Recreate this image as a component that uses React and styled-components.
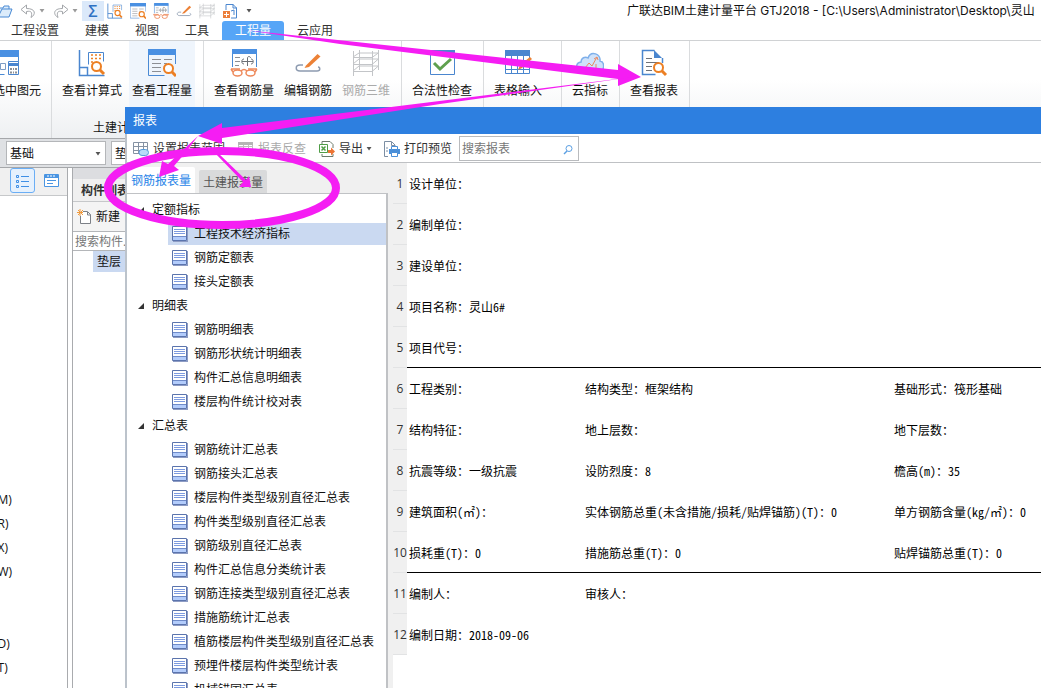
import React from "react";
import styled, { createGlobalStyle } from "styled-components";

const treeData = [
  {
    title: "定额指标",
    items: ["工程技术经济指标", "钢筋定额表", "接头定额表"],
  },
  {
    title: "明细表",
    items: [
      "钢筋明细表",
      "钢筋形状统计明细表",
      "构件汇总信息明细表",
      "楼层构件统计校对表",
    ],
  },
  {
    title: "汇总表",
    items: [
      "钢筋统计汇总表",
      "钢筋接头汇总表",
      "楼层构件类型级别直径汇总表",
      "构件类型级别直径汇总表",
      "钢筋级别直径汇总表",
      "构件汇总信息分类统计表",
      "钢筋连接类型级别直径汇总表",
      "措施筋统计汇总表",
      "植筋楼层构件类型级别直径汇总表",
      "预埋件楼层构件类型统计表",
      "机械锚固汇总表",
    ],
  },
];

const reportRows = [
  ["设计单位："],
  ["编制单位："],
  ["建设单位："],
  ["项目名称：灵山6#"],
  ["项目代号："],
  ["工程类别：", "结构类型：框架结构", "基础形式：筏形基础"],
  ["结构特征：", "地上层数：", "地下层数："],
  ["抗震等级：一级抗震", "设防烈度：8", "檐高(m)：35"],
  [
    "建筑面积(㎡)：",
    "实体钢筋总重(未含措施/损耗/贴焊锚筋)(T)：0",
    "单方钢筋含量(kg/㎡)：0",
  ],
  ["损耗重(T)：0", "措施筋总重(T)：0", "贴焊锚筋总重(T)：0"],
  ["编制人：", "审核人："],
  ["编制日期：2018-09-06"],
];

// rows with a rule under them
const ruledRows = [4, 9];

const componentTypes = [
  "筏板基础(M)",
  "筏板主筋(R)",
  "筏板负筋(X)",
  "基础板带(W)",
  "集水坑(K)",
  "柱墩(Y)",
  "独立基础(D)",
  "条形基础(T)",
];

const Svg = ({ size = 28, box = 28, children }) => (
  <svg
    width={size}
    height={size}
    viewBox={`0 0 ${box} ${box}`}
    fill="none"
    aria-hidden="true"
  >
    {children}
  </svg>
);

// Icons
const Magnifier = ({ x = 0, y = 0 }) => (
  <g transform={`translate(${x} ${y})`} stroke="#ec7f23">
    <circle cx="5.5" cy="5.5" r="4.5" strokeWidth="2" fill="#fff" />
    <path d="M9 9l4 4" strokeWidth="3" />
  </g>
);

const FormulaIcon = ({ size }) => (
  <Svg size={size}>
    <path d="M1.5 1v25.500h25M1.500 18.500h8v8" stroke="#4a86cf" strokeWidth="1.500" />
    <path d="M10.500 15.500v-12h15v9" stroke="#4a86cf" />
    <path
      d="M13 6h2m2 0h2m2 0h2M13 9.500h2m2 0h2m2 0h2M13 13h2"
      stroke="#ec7f23"
      strokeWidth="1.500"
    />
    <Magnifier x={13} y={12} />
  </Svg>
);

const QuantityIcon = ({ size }) => (
  <Svg size={size}>
    <path d="M.5 1v25.500h16M27.500 1v14" stroke="#4a8ad4" />
    <path d="M0 0h28v6H0z" fill="#4a90e2" />
    <path
      d="M4 10.500h9M4 14.500h9M4 18.500h9M4 22.500h9M16 10.500h8M16 14.500h3"
      stroke="#8c8f94"
    />
    <Magnifier x={15} y={14} />
  </Svg>
);

const RebarIcon = ({ size }) => (
  <Svg size={size}>
    <path d="M2.500 1v17M26.500 1v17" stroke="#4a8ad4" />
    <path d="M2 0h25v5H2z" fill="#4a90e2" />
    <path d="M5 8.500h5M5 12.500h5M5 16.500h4" stroke="#8c8f94" />
    <path
      d="M12 12.500h11M17.500 17V9c0-2 3-2 3 0M14 15c-3 0-3-5 0-5M21 15c3 0 3-5 0-5"
      stroke="#6c7076"
    />
    <path
      d="M1 20h9M18 20h9M11 22c2-2 4-2 6 0M1 20l2 3M27 20l-2 3"
      stroke="#ee8a5c"
      strokeWidth="1.500"
    />
    <ellipse cx="7.500" cy="24" rx="4.500" ry="3" stroke="#ee8a5c" strokeWidth="1.500" />
    <ellipse cx="20.500" cy="24" rx="4.500" ry="3" stroke="#ee8a5c" strokeWidth="1.500" />
  </Svg>
);

const EditIcon = ({ size }) => (
  <Svg size={size}>
    <path
      d="M9 16H6c-5 0-5 6 0 6h17c4 0 3-4 1-4"
      stroke="#8d9bb0"
      strokeWidth="1.500"
    />
    <path d="M12 16.500L23.500 5l3 2.500L15 18l-4.500 1z" fill="#ec8136" />
  </Svg>
);

const GridIcon = ({ size }) => (
  <Svg size={size}>
    <path
      d="M1.500 2v25M7.500 1v20M20.500 2v25M26.500 1v20M1 8.500h19l7-5M1 15.500h19l7-6M1 22.500h19l7-6M1 8l6-4h20M1 15l6-5h20M1 22l6-5h20"
      stroke="#c3c5c8"
    />
  </Svg>
);

const CheckIcon = () => (
  <Svg>
    <path d="M2.500 2.500h24v23h-24z" stroke="#4a86cf" />
    <path d="M2 1h25v5H2z" fill="#4a86cf" />
    <path d="M6 14l6 6 11-10" stroke="#5fa04e" strokeWidth="3" />
  </Svg>
);

const TableIcon = () => (
  <Svg>
    <path
      d="M1.500 3v21.500h24V3M1 11.500h24M1 15.500h24M1 20.500h24M7.500 7v17M13.500 7v17M19.500 7v17"
      stroke="#4a86cf"
    />
    <path d="M1 1h25v6H1z" fill="#4a86cf" />
    <path d="M14 21l2-5 10-8 2 2-10 9z" fill="#ec8136" />
  </Svg>
);

const CloudIcon = () => (
  <Svg>
    <path
      d="M6 23c-7-1-7-9-1-10 0-4 4-6 7-4 3-8 13-4 12 3 5 1 5 10-1 11z"
      fill="#cfe2fa"
      stroke="#7fb0ea"
      strokeWidth="1.500"
    />
    <path d="M9 19l4-5 3 3 5-9M18 10l3-2 1 3M10 23v-2M15 23v-3M20 23v-8" stroke="#e98a62" />
  </Svg>
);

const ReportIcon = () => (
  <Svg>
    <path d="M14.500 1.500H2.500v24h13M22.500 9v5" stroke="#4a86cf" strokeWidth="1.500" />
    <path d="M14 1l8 8h-8z" fill="#4a86cf" />
    <path d="M6 9.500h6M6 13.500h13M6 17.500h6M6 21.500h6" stroke="#6e7278" />
    <Magnifier x={13} y={13} />
  </Svg>
);

const PickIcon = () => (
  <Svg>
    <path d="M.5 1v24.500h13M27.500 1v12" stroke="#4a8ad4" />
    <path d="M0 1h28v7H0z" fill="#4a90e2" />
    <path d="M9.500 14.500h5v6h-5z" stroke="#7d9cc4" />
    <path d="M17.500 12.500h10v13h-10z" fill="#fff" stroke="#4a86cf" />
    <path d="M18 14h9v3h-9z" fill="#4a86cf" />
    <path d="M19 20h2m1 0h1m1 0h2M19 23.500h2m1 0h1m1 0h2" stroke="#8c8f94" strokeWidth="2" />
  </Svg>
);

const FolderIcon = () => (
  <Svg size={16} box={16}>
    <path d="M1 14V5h5l1-2h5v3M1 14l4-8h10l-3 8z" fill="#dcecfb" stroke="#4a8ad4" />
  </Svg>
);

const UndoIcon = ({ flip }) => (
  <Svg size={16} box={16}>
    <path
      transform={flip ? "matrix(-1 0 0 1 16 0)" : undefined}
      d="M6.500 2L1 6.500 6.500 11V8.500c5-1 6 1 4.500 6 5-3 5-9-4.500-9z"
      stroke="#a3a6aa"
    />
  </Svg>
);

const NewFileIcon = () => (
  <Svg size={16} box={16}>
    <path d="M4 7V1.500h7L14.500 5v10H9" stroke="#4a86cf" />
    <path d="M11 1v4h4" stroke="#4a86cf" />
    <path d="M1 8h7v7H1z" fill="#ec7f3b" />
    <path d="M2 11.500h5M4.500 9v5" stroke="#fff" />
    <path d="M9 8l3-1v5" stroke="#4a86cf" />
  </Svg>
);

const RangeIcon = ({ muted }) => (
  <Svg size={16} box={16}>
    <path
      d="M.5 1.500h14v11H.500zM0 5.500h15M0 9.500h15M5.500 1v12M10.500 1v8"
      stroke={muted ? "#c0c0c0" : "#8592a3"}
    />
    {muted ? (
      <path d="M0 1h15v3H0z" fill="#b5b5b5" />
    ) : (
      <rect x="6" y="8.500" width="9.500" height="6" rx="3" fill="#b8dbf8" stroke="#5a9bd8" />
    )}
  </Svg>
);

const ExportIcon = () => (
  <Svg size={16} box={16}>
    <path d="M3 3V.500h8l3 3V7M3 13v2.500h11V13" stroke="#6b7a6b" />
    <path d="M.5 3.500h8v8h-8z" fill="#fff" stroke="#4f9d46" />
    <path d="M2.500 5.500l4 4M6.500 5.500l-4 4" stroke="#4f9d46" strokeWidth="1.500" />
    <path d="M9 9h3V6.500l4 4-4 4V12H9z" fill="#ec7433" />
  </Svg>
);

const PrintIcon = () => (
  <Svg size={16} box={16}>
    <path d="M4 15.500H.500V.500h7L11 4v2M7.500 1v3.500H11" stroke="#7c8ea3" />
    <path d="M2 7h2M2 10h2" stroke="#7c8ea3" />
    <path d="M5 8h11v5H5z" fill="#4a8fd8" />
    <path d="M7.500 5.500h6v3h-6zM7.500 11.500h6v4h-6z" fill="#fff" stroke="#4a8fd8" />
  </Svg>
);

const SheetIcon = () => (
  <Svg size={16} box={16}>
    <path d="M.5 .5h14v14H.500z" fill="#fff" stroke="#5b74ad" />
    <path d="M1 11h13v3H1z" fill="#b3ccfb" />
    <path d="M2 3.500h11M2 5.500h11M2 7.500h11" stroke="#7d9be0" />
    <path d="M1 10.500h13" stroke="#6f8bc9" />
    <path d="M1 15.500h15M15.500 1v15" stroke="#8e9cc4" />
  </Svg>
);

const NewIcon = () => (
  <Svg size={16} box={16}>
    <path d="M6 2.500h4.500l3 3v9h-10V7M10.500 3v3h3" fill="#fff" stroke="#7c8087" />
    <path d="M3 0v7M0 3.500h6M1 1l5 5M6 1L1 6" stroke="#f09a3c" />
  </Svg>
);

const ListViewIcon = () => (
  <Svg size={16} box={16}>
    <path d="M1.500 2.500h2v2h-2zM1.500 7.500h2v2h-2zM1.500 12.500h2v2h-2z" stroke="#3e8fe6" />
    <path d="M6 3.500h8M6 8.500h8M6 13.500h8" stroke="#3e8fe6" />
  </Svg>
);

const CardViewIcon = () => (
  <Svg size={16} box={16}>
    <path d="M.5 1.500h14v12H.500z" fill="#fff" stroke="#4a95e2" />
    <path d="M1 1h13v4H1z" fill="#4a95e2" />
    <path d="M3 3h2m1 0h2m1 0h2" stroke="#fff" />
    <path d="M3 7.500h9M3 10.500h6" stroke="#4a95e2" />
  </Svg>
);

const SearchIcon = () => (
  <Svg size={12} box={12}>
    <circle cx="7" cy="5.500" r="3" stroke="#5b9fe3" />
    <path d="M5 8l-3 3" stroke="#5b9fe3" strokeWidth="1.500" />
  </Svg>
);

const Expander = () => (
  <Svg size={8} box={8}>
    <path d="M7 1v6H1z" fill="#333" />
  </Svg>
);

const Annotations = () => (
  <AnnotationLayer aria-hidden="true">
    <g fill="#f51df3">
      <path d="M245 30L618 70V64L641 77 618 86V79L340 44z" />
      <path d="M633 77L222 128V123L198 136 222 144V138L440 104z" />
      <path d="M198 136L168 164 162 161 159 177 179 170 174 166 186 152z" />
      <path d="M214 152L243 182 239 187 251 187 249 176 246 180 217 152z" />
    </g>
    <ellipse
      cx="222"
      cy="188"
      rx="114"
      ry="37"
      fill="none"
      stroke="#f51df3"
      strokeWidth="8"
    />
  </AnnotationLayer>
);

const App = () => {
  return (
    <Page>
      <GlobalStyle />
      <TitleBar>
        <QuickAccess>
          <QuickButton aria-label="打开"><FolderIcon /></QuickButton>
          <QuickButton aria-label="撤销">
            <UndoIcon />
            <Caret $color="#9a9a9a" />
          </QuickButton>
          <QuickButton aria-label="恢复">
            <UndoIcon flip />
            <Caret $color="#9a9a9a" />
          </QuickButton>
          <SumButton aria-label="汇总计算">Σ</SumButton>
          <QuickButton aria-label="查看计算式"><FormulaIcon size={16} /></QuickButton>
          <QuickButton aria-label="查看工程量"><QuantityIcon size={16} /></QuickButton>
          <QuickButton aria-label="查看钢筋量"><RebarIcon size={16} /></QuickButton>
          <QuickButton aria-label="编辑钢筋"><EditIcon size={16} /></QuickButton>
          <QuickButton aria-label="钢筋三维"><GridIcon size={16} /></QuickButton>
          <QuickButton aria-label="新建"><NewFileIcon /></QuickButton>
          <QuickButton aria-label="更多"><Caret /></QuickButton>
        </QuickAccess>
        <WindowTitle>
          广联达BIM土建计量平台 GTJ2018 - [C:\Users\Administrator\Desktop\灵山
        </WindowTitle>
      </TitleBar>

      <MenuBar>
        {["工程设置", "建模", "视图", "工具", "工程量", "云应用"].map((name) => (
          <MenuTab key={name} $active={name === "工程量"}>
            {name}
          </MenuTab>
        ))}
      </MenuBar>

      <Ribbon>
        <RibbonGroup $width={52} $end>
          <RibbonRow>
            <RibbonButton><PickIcon />查看选中图元</RibbonButton>
          </RibbonRow>
        </RibbonGroup>
        <RibbonGroup $width={152}>
          <RibbonRow>
            <RibbonButton><FormulaIcon />查看计算式</RibbonButton>
            <RibbonButton $active><QuantityIcon />查看工程量</RibbonButton>
          </RibbonRow>
          <GroupLabel>土建计</GroupLabel>
        </RibbonGroup>
        <RibbonGroup $width={198}>
          <RibbonRow>
            <RibbonButton><RebarIcon />查看钢筋量</RibbonButton>
            <RibbonButton><EditIcon />编辑钢筋</RibbonButton>
            <RibbonButton disabled><GridIcon />钢筋三维</RibbonButton>
          </RibbonRow>
        </RibbonGroup>
        <RibbonGroup $width={82}>
          <RibbonRow>
            <RibbonButton><CheckIcon />合法性检查</RibbonButton>
          </RibbonRow>
        </RibbonGroup>
        <RibbonGroup $width={78}>
          <RibbonRow>
            <RibbonButton><TableIcon />表格输入</RibbonButton>
          </RibbonRow>
        </RibbonGroup>
        <RibbonGroup $width={58}>
          <RibbonRow>
            <RibbonButton><CloudIcon />云指标</RibbonButton>
          </RibbonRow>
        </RibbonGroup>
        <RibbonGroup $width={70}>
          <RibbonRow>
            <RibbonButton><ReportIcon />查看报表</RibbonButton>
          </RibbonRow>
        </RibbonGroup>
      </Ribbon>

      <FilterBar>
        <SelectBox>
          <select aria-label="楼层" defaultValue="基础">
            <option>基础</option>
          </select>
          <Caret />
        </SelectBox>
        <SelectBox>
          <select aria-label="构件类型" defaultValue="垫层">
            <option>垫层</option>
          </select>
          <Caret />
        </SelectBox>
      </FilterBar>

      <Workspace>
        <Palette>
          <PaletteHeader>
            <ViewButton $active aria-label="列表视图"><ListViewIcon /></ViewButton>
            <ViewButton aria-label="卡片视图"><CardViewIcon /></ViewButton>
          </PaletteHeader>
          <TypeList>
            {componentTypes.map((type) => (
              <li key={type}>{type}</li>
            ))}
          </TypeList>
        </Palette>
        <ComponentPanel>
          <PanelGrip />
          <PanelTitle>构件列表</PanelTitle>
          <NewButton><NewIcon />新建</NewButton>
          <PanelSearch aria-label="搜索构件" placeholder="搜索构件..." />
          <PanelItem>垫层</PanelItem>
        </ComponentPanel>
      </Workspace>

      <Dialog role="dialog" aria-label="报表">
        <DialogTitle>报表</DialogTitle>
        <DialogToolbar>
          <ToolButton><RangeIcon />设置报表范围</ToolButton>
          <ToolButton disabled><RangeIcon muted />报表反查</ToolButton>
          <ToolButton><ExportIcon />导出<Caret /></ToolButton>
          <ToolButton><PrintIcon />打印预览</ToolButton>
          <SearchBox>
            <input aria-label="搜索报表" placeholder="搜索报表" />
            <SearchIcon />
          </SearchBox>
        </DialogToolbar>
        <DialogBody>
          <Sidebar>
            <ReportTabs>
              <ReportTab $active>钢筋报表量</ReportTab>
              <ReportTab>土建报表量</ReportTab>
            </ReportTabs>
            <Tree>
              {treeData.map((group, g) => (
                <React.Fragment key={group.title}>
                  <TreeGroup><Expander />{group.title}</TreeGroup>
                  {group.items.map((item, i) => (
                    <TreeItem key={item} $selected={g === 0 && i === 0}>
                      <SheetIcon />
                      {item}
                    </TreeItem>
                  ))}
                </React.Fragment>
              ))}
            </Tree>
          </Sidebar>
          <ReportPane>
            <ReportTable>
              <colgroup>
                <col width="14" />
                <col width="176" />
                <col width="309" />
                <col />
              </colgroup>
              <tbody>
                {reportRows.map((row, i) => (
                  <ReportRow key={i} $ruled={ruledRows.includes(i)}>
                    <th scope="row">{i + 1}</th>
                    {[0, 1, 2].map((c) => (
                      <td key={c}>{row[c]}</td>
                    ))}
                  </ReportRow>
                ))}
              </tbody>
            </ReportTable>
          </ReportPane>
        </DialogBody>
      </Dialog>

      <Annotations />
    </Page>
  );
};

const GlobalStyle = createGlobalStyle`
  * {
    box-sizing: border-box;
    margin: 0;
    padding: 0;
  }
  body {
    font-family: "Open Sans", "Noto Sans CJK SC", sans-serif;
    font-size: 12px;
    line-height: 18px;
    color: #111;
    overflow: hidden;
  }
  button, input, select {
    font: inherit;
    color: inherit;
    border: none;
    background: none;
    outline: none;
  }
  svg {
    flex-shrink: 0;
  }
`;

const Page = styled.div`
  position: relative;
  display: flex;
  flex-direction: column;
  height: 100vh;
  overflow: hidden;
  background: #fff;
  white-space: nowrap;
`;

const Caret = styled.span`
  flex-shrink: 0;
  width: 8px;
  height: 4px;
  background: ${(props) => props.$color || "#555"};
  clip-path: polygon(15% 0, 85% 0, 50% 100%);
`;

const TitleBar = styled.header`
  display: flex;
  flex-shrink: 0;
  height: 21px;
`;

const QuickAccess = styled.div`
  display: flex;
  align-items: center;
  gap: 7px;
  width: 630px;
  margin-left: -3px;
  flex-shrink: 0;
`;

const QuickButton = styled.button`
  display: flex;
  align-items: center;
  gap: 2px;
`;

const SumButton = styled.button`
  width: 22px;
  height: 20px;
  margin: 0 -4px;
  background: #dbe9fa;
  color: #2f72c4;
  font-size: 16px;
  font-weight: 600;
`;

const WindowTitle = styled.h1`
  font-family: Inter, "Noto Sans CJK SC", sans-serif;
  font-size: 12px;
  font-weight: normal;
  line-height: 22px;
`;

const MenuBar = styled.nav`
  display: flex;
  align-items: flex-end;
  flex-shrink: 0;
  height: 20px;
  border-bottom: 1px solid #d0d2d4;
`;

const MenuTab = styled.button`
  height: 19px;
  padding: 1px 13px 0;
  line-height: 18px;
  border-radius: 3px 3px 0 0;
  background: ${(props) => (props.$active ? "#56a5f7" : "none")};
  color: ${(props) => (props.$active ? "#fff" : "#333")};
  &:first-child {
    margin-left: -2px;
  }
`;

const Ribbon = styled.div`
  display: flex;
  flex-shrink: 0;
  height: 97px;
  background: linear-gradient(#fff 40%, #eef0f2);
`;

const RibbonGroup = styled.section`
  display: flex;
  flex-direction: column;
  align-items: ${(props) => (props.$end ? "flex-end" : "stretch")};
  flex-shrink: 0;
  width: ${(props) => props.$width}px;
  padding: 0 7px;
  border-right: 1px solid #dadcde;
`;

const RibbonRow = styled.div`
  display: flex;
  gap: 4px;
`;

const RibbonButton = styled.button`
  display: flex;
  flex-direction: column;
  align-items: center;
  gap: 5px;
  height: 66px;
  padding: 8px 3px 7px;
  background: ${(props) => (props.$active ? "#eff5fc" : "none")};
  &:disabled {
    color: #aaa;
  }
`;

const GroupLabel = styled.p`
  padding: 12px 0 0 34px;
`;

const FilterBar = styled.div`
  display: flex;
  align-items: center;
  flex-shrink: 0;
  gap: 5px;
  height: 30px;
  padding: 0 6px;
  background: #dfe1e4;
  border-top: 1px solid #a5a7aa;
  border-bottom: 1px solid #a5a7aa;
`;

const SelectBox = styled.div`
  display: flex;
  align-items: center;
  width: 100px;
  height: 24px;
  padding: 1px 3px 0 0;
  background: #fff;
  border: 1px solid #b4b6b9;
  select {
    flex: 1;
    padding-left: 3px;
    appearance: none;
  }
`;

const Workspace = styled.div`
  display: flex;
  flex: 1;
  gap: 4px;
  min-height: 0;
`;

const Palette = styled.aside`
  display: flex;
  flex-direction: column;
  flex-shrink: 0;
  width: 68px;
  overflow: hidden;
  border-right: 1px solid #a9abae;
`;

const PaletteHeader = styled.div`
  display: flex;
  flex-shrink: 0;
  gap: 4px;
  height: 28px;
  padding: 0 10px;
  background: #f0f0f0;
  border-bottom: 1px solid #c6c8ca;
`;

const ViewButton = styled.button`
  display: grid;
  place-items: center;
  width: 25px;
  height: 25px;
  flex-shrink: 0;
  border: 1px solid ${(props) => (props.$active ? "#6aaef5" : "transparent")};
  border-radius: 3px;
  background: ${(props) => (props.$active ? "#e6f1fd" : "none")};
`;

// scrolled sideways, so only the shortcut letters stay in view
const TypeList = styled.ul`
  margin: auto 0 8px -54px;
  list-style: none;
  line-height: 24px;
`;

const ComponentPanel = styled.section`
  flex: 1;
  border-left: 1px solid #a9abae;
`;

const PanelGrip = styled.div`
  height: 11px;
  background: #dcdde0;
`;

const PanelTitle = styled.h2`
  height: 23px;
  padding-left: 8px;
  font-size: 12px;
  font-weight: bold;
  line-height: 24px;
  color: #333;
  background: #f0f0f0;
  border-bottom: 1px solid #c6c8ca;
`;

const NewButton = styled.button`
  display: flex;
  align-items: center;
  gap: 3px;
  width: 100%;
  height: 29px;
  padding-left: 4px;
  background: #f4f4f4;
`;

const PanelSearch = styled.input`
  display: block;
  width: 100%;
  height: 20px;
  padding: 1px 0 0 2px;
  border-top: 1px solid #b4b6b9;
  border-bottom: 1px solid #b4b6b9;
  &::placeholder {
    color: #777;
  }
`;

const PanelItem = styled.div`
  height: 21px;
  margin-left: 20px;
  padding-left: 4px;
  line-height: 22px;
  background: #cad9f1;
`;

// window opened over the main workspace
const Dialog = styled.div`
  position: absolute;
  top: 107px;
  right: 0;
  bottom: 0;
  left: 125px;
  display: flex;
  flex-direction: column;
  background: #fff;
  border-left: 2px solid #bcc3cb;
`;

const DialogTitle = styled.h2`
  flex-shrink: 0;
  height: 27px;
  margin-left: -2px;
  padding-left: 8px;
  font-size: 12px;
  font-weight: normal;
  line-height: 28px;
  color: #fff;
  background: #2d7fe0;
`;

const DialogToolbar = styled.div`
  display: flex;
  align-items: center;
  flex-shrink: 0;
  gap: 13px;
  height: 29px;
  padding: 1px 0 0 6px;
  border-bottom: 1px solid #bfc1c4;
`;

const ToolButton = styled.button`
  display: flex;
  align-items: center;
  gap: 4px;
  color: #333;
  &:disabled {
    color: #aaa;
  }
  ${Caret} {
    margin: 0 -2px;
  }
`;

const SearchBox = styled.div`
  display: flex;
  align-items: center;
  width: 120px;
  height: 25px;
  margin-left: -6px;
  padding: 0 4px 0 2px;
  border: 1px solid #b9bbbe;
  input {
    flex: 1;
    min-width: 0;
  }
  input::placeholder {
    color: #777;
  }
`;

const DialogBody = styled.div`
  display: flex;
  flex: 1;
  gap: 5px;
  min-height: 0;
  background: #f0f0f0;
`;

const Sidebar = styled.aside`
  display: flex;
  flex-direction: column;
  flex-shrink: 0;
  width: 261px;
`;

const ReportTabs = styled.div`
  display: flex;
  align-items: flex-end;
  flex-shrink: 0;
  gap: 4px;
  height: 30px;
`;

const ReportTab = styled.button`
  height: ${(props) => (props.$active ? 26 : 23)}px;
  padding: 2px 4px 0;
  border-radius: 2px 2px 0 0;
  background: ${(props) => (props.$active ? "#fff" : "#d9dadb")};
  color: ${(props) => (props.$active ? "#2a85e8" : "#555")};
`;

const Tree = styled.div`
  flex: 1;
  min-height: 0;
  padding-top: 4px;
  overflow: hidden;
  background: #fff;
  border-top: 1px solid #c0c2c5;
  border-right: 2px solid #c0c2c5;
`;

const TreeGroup = styled.div`
  display: flex;
  align-items: center;
  gap: 7px;
  height: 24px;
  padding-left: 10px;
`;

const TreeItem = styled.div`
  display: flex;
  align-items: center;
  gap: 6px;
  height: 24px;
  margin-left: 41px;
  padding-left: 4px;
  border: solid transparent;
  border-width: 1px 0;
  background: ${(props) => (props.$selected ? "#cad9f1" : "none")} padding-box;
`;

const ReportPane = styled.main`
  flex: 1;
  min-width: 0;
  overflow: hidden;
  background: #fff;
`;

const ReportTable = styled.table`
  width: 100%;
  table-layout: fixed;
  border-spacing: 0;
`;

const ReportRow = styled.tr`
  height: 41px;
  th {
    padding-top: 2px;
    font-weight: normal;
    color: #333;
    background: #f0f0f0;
    border-bottom: 1px solid #e2e3e4;
  }
  td {
    padding: 2px 0 0 2px;
    font-family: "Noto Sans CJK SC", sans-serif;
    font-feature-settings: "hwid" 1;
    color: #000;
    border-bottom: 1px solid ${(props) => (props.$ruled ? "#000" : "transparent")};
  }
`;

const AnnotationLayer = styled.svg`
  position: absolute;
  top: 0;
  left: 0;
  width: 1041px;
  height: 688px;
  pointer-events: none;
`;

export default App;
